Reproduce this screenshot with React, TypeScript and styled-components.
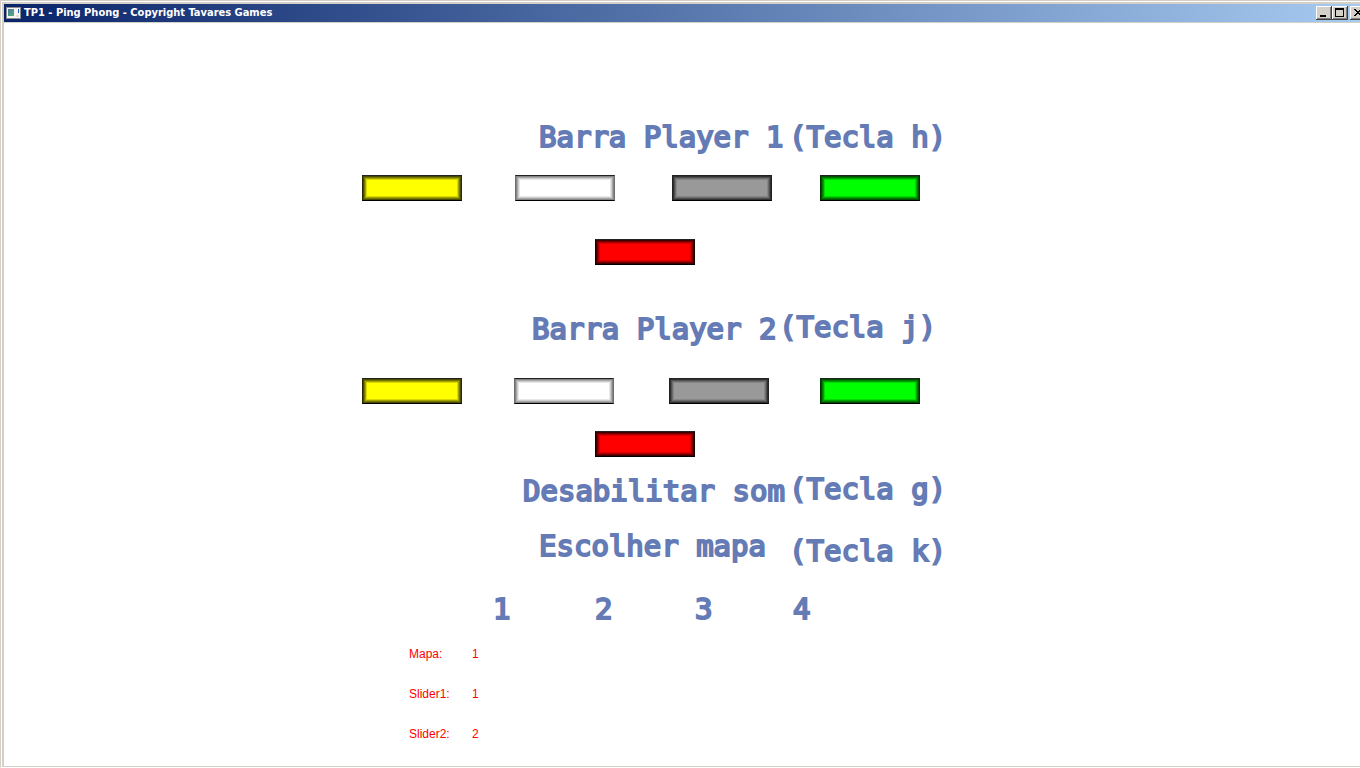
import React from "react";
import styled, { createGlobalStyle } from "styled-components";

const GlobalStyle = createGlobalStyle`
  * { box-sizing: border-box; }
  body {
    margin: 0;
    background: #fff;
    overflow-x: hidden;
  }
`;

const Frame = styled.div`
  display: flex;
  flex-direction: column;
  min-height: 100vh;
  overflow: hidden;
  border-top: 1px solid #d4d0c8;
  border-left: 1px solid #d4d0c8;
  border-bottom: 1px solid #fff;
`;

const FrameInner = styled.div`
  flex: 1;
  display: flex;
  flex-direction: column;
  border-top: 1px solid #fff;
  border-left: 1px solid #fff;
`;

const FrameBody = styled.div`
  flex: 1;
  display: flex;
  flex-direction: column;
  border: 2px solid #d4d0c8;
  border-right: 0;
  border-bottom-width: 1px;
`;

const TitleBar = styled.header`
  display: flex;
  align-items: center;
  height: 19px;
  padding-left: 2px;
  border-bottom: 1px solid #d4d0c8;
  background: linear-gradient(to right, #0a246a, #a6caf0);
`;

const Title = styled.h1`
  flex: 1;
  margin: 0 0 0 2px;
  color: #fff;
  font: bold 11px/18px "DejaVu Sans Condensed", "DejaVu Sans", sans-serif;
  white-space: nowrap;
`;

const WindowButtons = styled.div`
  display: flex;
  margin-right: -6px;
`;

const WindowButton = styled.button<{ $apart?: boolean }>`
  display: flex;
  width: 16px;
  height: 14px;
  margin: 0 0 0 ${(p) => (p.$apart ? 2 : 0)}px;
  padding: 0;
  border: 0;
  background: #d4d0c8;
  box-shadow: inset -1px -1px #404040, inset 1px 1px #fff, inset -2px -2px #808080;
`;

const Stage = styled.main`
  width: 100%;
  max-width: 640px;
  margin: 0 auto;
  padding: 97px 0 24px;
`;

const menuText = `
  color: #647bb5;
  font: 29px/34px "DejaVu Sans Mono", monospace;
  -webkit-text-stroke: 2px #647bb5;
  white-space: pre;
`;

type HintAlign = "start" | "end";

const HeadingRow = styled.div<{ $indent: number; $label: number; $gap: number; $height: number }>`
  display: grid;
  grid-template-columns: ${(p) => p.$label}px auto;
  height: ${(p) => p.$height}px;
  margin-top: ${(p) => p.$gap}px;
  padding-left: ${(p) => p.$indent}px;
`;

const Heading = styled.h2<{ $align: HintAlign }>`
  ${menuText}
  margin: 0;
  align-self: ${(p) => p.$align};
`;

const Hint = styled.span<{ $align: HintAlign }>`
  ${menuText}
  align-self: ${(p) => p.$align};
`;

const BarRow = styled.div<{ $columns: string; $gap: number; $indent?: number }>`
  display: grid;
  grid-template-columns: ${(p) => p.$columns};
  margin-top: ${(p) => p.$gap}px;
  padding-left: ${(p) => p.$indent ?? 0}px;
`;

interface BarShade {
  edge: string;
  rings: [string, string, string, string];
  fill: string;
}

const Bar = styled.button<{ $shade: BarShade }>`
  width: 100px;
  height: 26px;
  padding: 0;
  border: 1px solid ${(p) => p.$shade.edge};
  border-color: #222 ${(p) => p.$shade.edge} #000;
  background: ${(p) => p.$shade.fill};
  box-shadow:
    inset 0 0 0 1px ${(p) => p.$shade.rings[0]},
    inset 0 0 0 2px ${(p) => p.$shade.rings[1]},
    inset 0 0 0 3px ${(p) => p.$shade.rings[2]},
    inset 0 0 0 4px ${(p) => p.$shade.rings[3]};
`;

const MapRow = styled.div`
  display: grid;
  grid-template-columns: 102px 100px 98px auto;
  margin-top: 24px;
  padding-left: 131px;
`;

const MapButton = styled.button`
  ${menuText}
  justify-self: start;
  padding: 0;
  border: 0;
  background: none;
`;

const Status = styled.dl`
  display: grid;
  grid-template-columns: 63px auto;
  row-gap: 24px;
  margin: 20px 0 0;
  padding-left: 47px;
  color: #f00;
  font: 12px/16px "Liberation Sans", Arial, sans-serif;

  dt, dd { margin: 0; }
`;

const shades: Record<string, BarShade> = {
  amarelo: { edge: "#2a2a00", rings: ["#4c4c00", "#747400", "#a4a400", "#d8d800"], fill: "#ffff00" },
  branco: { edge: "#6e6e6e", rings: ["#858585", "#a8a8a8", "#cccccc", "#e8e8e8"], fill: "#ffffff" },
  cinza: { edge: "#222222", rings: ["#303030", "#505050", "#6c6c6c", "#868686"], fill: "#999999" },
  verde: { edge: "#063006", rings: ["#005000", "#007800", "#00a400", "#00d800"], fill: "#00ff00" },
  vermelho: { edge: "#1c0000", rings: ["#400000", "#740000", "#a80000", "#dc0000"], fill: "#ff0000" },
};

const topShades = ["amarelo", "branco", "cinza", "verde"];

function BarChoices({ player, columns, gap, redGap }: { player: number; columns: string; gap: number; redGap: number }) {
  return (
    <>
      <BarRow $columns={columns} $gap={gap}>
        {topShades.map((name) => (
          <Bar key={name} type="button" $shade={shades[name]} aria-label={`Player ${player}: ${name}`} />
        ))}
      </BarRow>
      <BarRow $columns="auto" $gap={redGap} $indent={233}>
        <Bar type="button" $shade={shades.vermelho} aria-label={`Player ${player}: vermelho`} />
      </BarRow>
    </>
  );
}

function AppIcon() {
  return (
    <svg width="16" height="14" viewBox="0 0 16 14" aria-hidden="true">
      <defs>
        <linearGradient id="pane" x1="0" y1="0" x2="1" y2="1">
          <stop offset="0" stopColor="#4a78a8" />
          <stop offset="1" stopColor="#58b070" />
        </linearGradient>
      </defs>
      <rect x="0" y="1" width="15" height="12" fill="#8c8c8c" />
      <rect x="1" y="2" width="13" height="10" fill="#f4f4f4" />
      <rect x="2" y="3" width="6" height="7" fill="url(#pane)" />
      <rect x="12" y="3" width="1" height="4" fill="#2c5cae" />
      <rect x="10" y="9" width="3" height="2" fill="#e0e0e0" />
    </svg>
  );
}

export default function App() {
  return (
    <>
      <GlobalStyle />
      <Frame>
        <FrameInner>
          <FrameBody>
            <TitleBar>
              <AppIcon />
              <Title>TP1 - Ping Phong - Copyright Tavares Games</Title>
              <WindowButtons>
                <WindowButton type="button" aria-label="Minimizar">
                  <svg width="16" height="14"><rect x="4" y="9" width="6" height="2" fill="#000" /></svg>
                </WindowButton>
                <WindowButton type="button" aria-label="Maximizar">
                  <svg width="16" height="14">
                    <path d="M3 2h9v9H3zM4 4v6h7V4z" fill="#000" fillRule="evenodd" />
                  </svg>
                </WindowButton>
                <WindowButton type="button" aria-label="Fechar" $apart>
                  <svg width="16" height="14" shapeRendering="crispEdges">
                    <path d="M4 3h2v1h1v1h2V4h1V3h2v1h-1v1h-1v1H9v1h1v1h1v1h1v1h-2V9H9V8H7v1H6v1H4V9h1V8h1V7h1V6H6V5H5V4H4z" fill="#000" />
                  </svg>
                </WindowButton>
              </WindowButtons>
            </TitleBar>
            <Stage>
              <HeadingRow $indent={177} $label={250} $gap={0} $height={34}>
                <Heading $align="start">Barra Player 1</Heading>
                <Hint $align="start">(Tecla h)</Hint>
              </HeadingRow>
              <BarChoices player={1} columns="153px 157px 148px auto" gap={21} redGap={38} />
              <HeadingRow $indent={170} $label={247} $gap={45} $height={36}>
                <Heading $align="end">Barra Player 2</Heading>
                <Hint $align="start">(Tecla j)</Hint>
              </HeadingRow>
              <BarChoices player={2} columns="152px 155px 151px auto" gap={32} redGap={27} />
              <HeadingRow $indent={161} $label={266} $gap={15} $height={36}>
                <Heading $align="end">Desabilitar som</Heading>
                <Hint $align="start">(Tecla g)</Hint>
              </HeadingRow>
              <HeadingRow $indent={177} $label={250} $gap={21} $height={39}>
                <Heading $align="start">Escolher mapa</Heading>
                <Hint $align="end">(Tecla k)</Hint>
              </HeadingRow>
              <MapRow>
                {[1, 2, 3, 4].map((map) => (
                  <MapButton key={map} type="button">{map}</MapButton>
                ))}
              </MapRow>
              <Status>
                <dt>Mapa:</dt>
                <dd>1</dd>
                <dt>Slider1:</dt>
                <dd>1</dd>
                <dt>Slider2:</dt>
                <dd>2</dd>
              </Status>
            </Stage>
          </FrameBody>
        </FrameInner>
      </Frame>
    </>
  );
}
